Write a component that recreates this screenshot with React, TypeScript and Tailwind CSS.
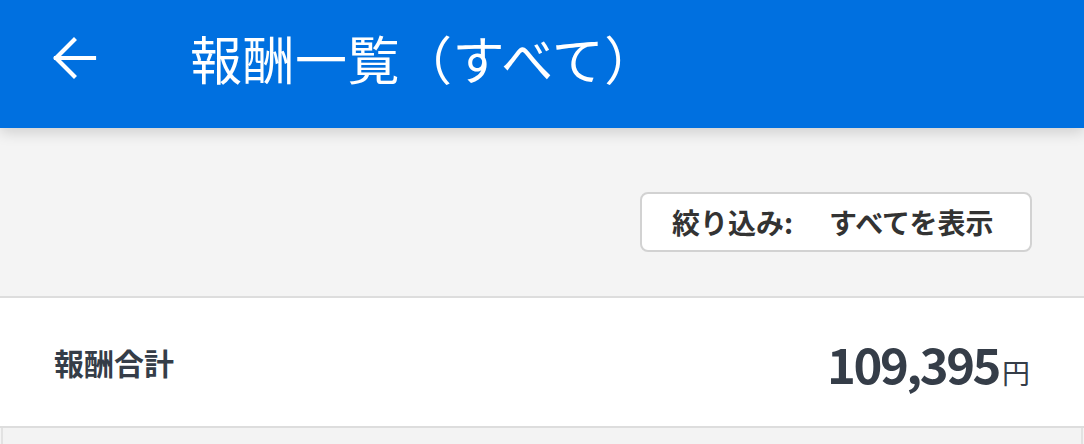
const jp = { fontFamily: '"Noto Sans CJK JP", "Noto Sans", sans-serif' };

function BackArrow() {
  return (
    <svg width="46" height="42" viewBox="0 0 46 42" fill="none" stroke="currentColor" strokeWidth="4.2" strokeLinecap="square">
      <path d="M4 21H42" />
      <path d="M22 3L4 21L22 39" strokeLinejoin="miter" />
    </svg>
  );
}

export default function App() {
  return (
    <div className="h-[444px] w-full overflow-hidden bg-[#f4f4f4]" style={jp}>
      {/* Header */}
      <header className="relative z-10 flex h-[128px] items-center bg-[#0070e0] pb-[12px] text-white shadow-[0_4px_14px_rgba(0,0,0,0.16)]">
        <button className="ml-[52px] flex items-center">
          <BackArrow />
        </button>
        <h1 className="ml-[92px] text-[52px] leading-none font-normal tracking-[0.5px]">
          報酬一覧（すべて）
        </h1>
      </header>

      {/* Filter */}
      <div className="flex justify-end px-[52px] pt-[64px] pb-[44px]">
        <button className="flex h-[60px] w-[392px] items-center rounded-[8px] border-2 border-[#d2d2d2] bg-white pl-[30px] text-[28px] font-bold text-[#333333]">
          <span>絞り込み:</span>
          <span className="ml-[36px]">すべてを表示</span>
        </button>
      </div>

      {/* Total */}
      <section className="flex h-[132px] items-center justify-between border-y-2 border-[#dddddd] bg-white px-[54px]">
        <span className="text-[30px] font-bold text-[#353d48]">報酬合計</span>
        <span className="flex items-baseline text-[#353d48]">
          <span className="text-[49px] leading-none font-bold tracking-[-2.5px]">109,395</span>
          <span className="ml-[3px] text-[28px] leading-none">円</span>
        </span>
      </section>

      <div className="mx-px h-[40px] border-x-2 border-[#e2e2e2] bg-[#f3f3f3]" />
    </div>
  );
}
